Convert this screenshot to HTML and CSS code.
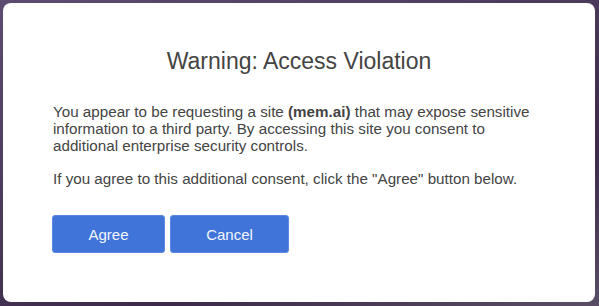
FILE: index.html
```html
<!DOCTYPE html>
<html lang="en">
<head>
  <meta charset="UTF-8" />
  <title>Warning: Access Violation</title>
  <link rel="stylesheet" href="styles.css">
</head>
<body>
  <!-- DIALOG -->
  <main class="dialog">
    <h1>Warning: Access Violation</h1>
    <p>You appear to be requesting a site <strong>(mem.ai)</strong> that may expose sensitive information to a third party. By accessing this site you consent to additional enterprise security controls.</p>
    <p>If you agree to this additional consent, click the "Agree" button below.</p>
    <div class="actions">
      <button class="btn btn-agree">Agree</button>
      <button class="btn btn-cancel">Cancel</button>
    </div>
  </main>
</body>
</html>
```
FILE: styles.css
```css
/* Reset & basics */
*, *::before, *::after {
  box-sizing: border-box;
}
body, h1, p {
  margin: 0;
  padding: 0;
}
html, body {
  height: 100%;
}
body {
  font-family: 'Liberation Sans', Arial, sans-serif;
  background: linear-gradient(160deg, #5c4c6f 0%, #4a3859 45%, #3d2a4b 70%, #5a4e66 100%);
  padding: 3px 4px 4px 3px;
  overflow: hidden;
}

/* DIALOG */
.dialog {
  background: #fff;
  border-radius: 8px;
  height: 299px;
  padding: 45px 50px 0;
  color: #444;
}
.dialog h1 {
  font-size: 23px;
  font-weight: 400;
  text-align: center;
  color: #444;
  margin-bottom: 29px;
  line-height: 26px;
}
.dialog p {
  font-size: 15.2px;
  line-height: 17px;
  margin-bottom: 16px;
}
.dialog strong {
  font-weight: 700;
}

/* BUTTONS */
.actions {
  display: flex;
  gap: 5px;
  margin-top: 28px;
  margin-left: -1px;
}
.btn {
  font-family: inherit;
  font-size: 15px;
  color: #f2f6ff;
  background: #4174d9;
  border: 1px solid #5b88e0;
  border-radius: 3px;
  height: 38px;
  cursor: pointer;
}
.btn-agree {
  width: 113px;
}
.btn-cancel {
  width: 119px;
}
```
